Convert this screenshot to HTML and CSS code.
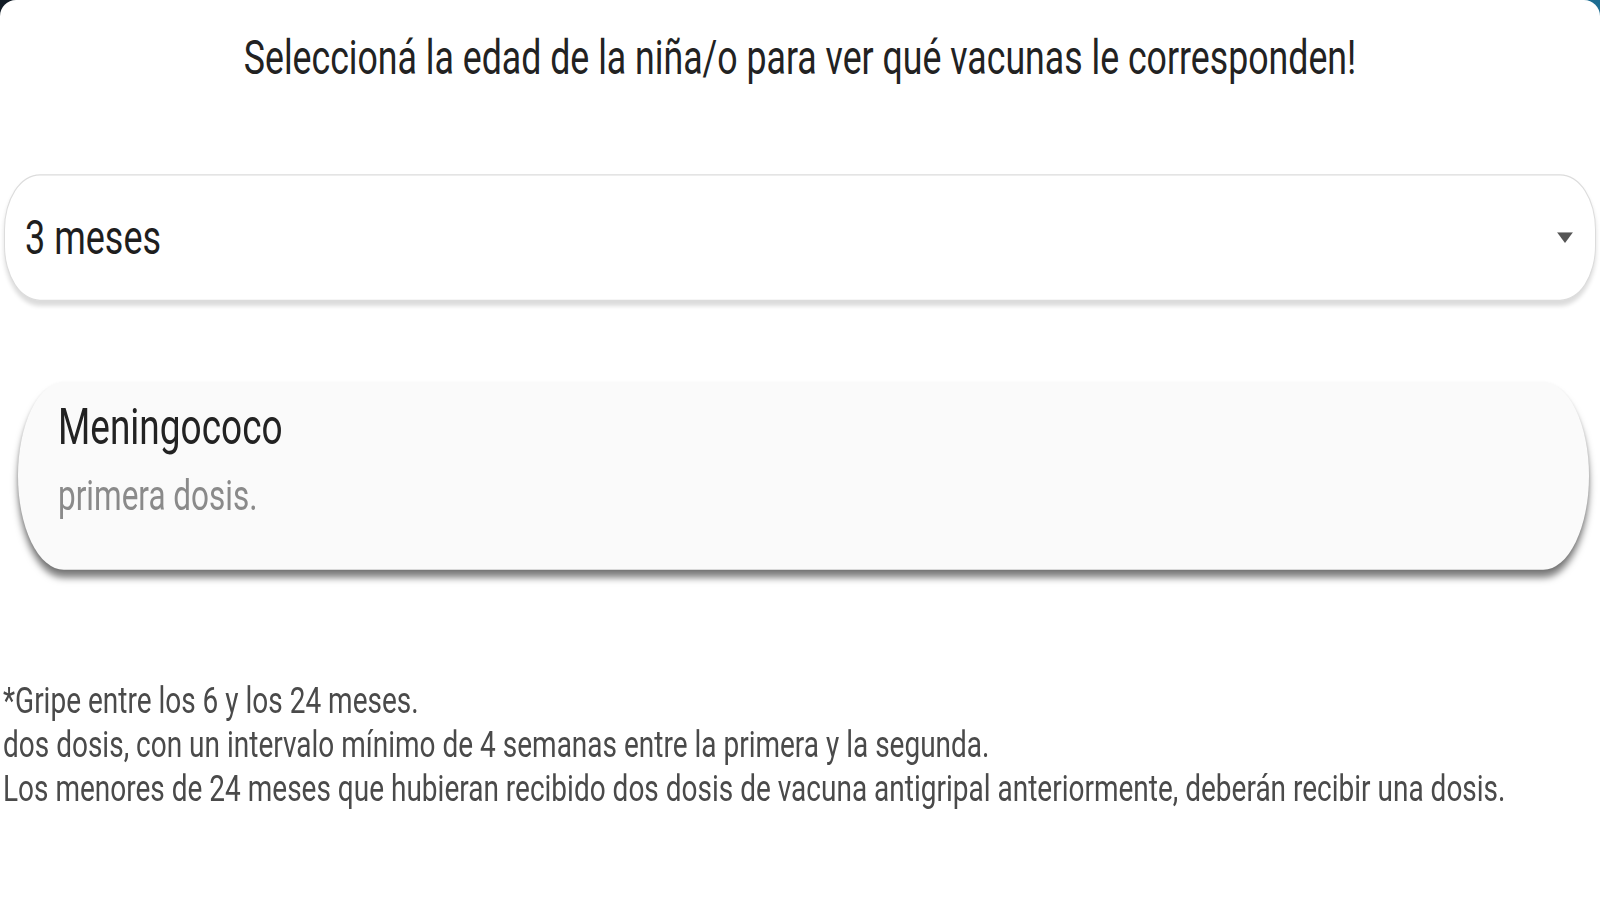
FILE: index.html
```html
<!DOCTYPE html>
<html lang="es">
<head>
<meta charset="utf-8">
<title>Vacunas</title>
<link rel="stylesheet" href="styles.css">
</head>
<body>
<div class="stage">
  <main class="sheet">
    <h1 class="title">Seleccioná la edad de la niña/o para ver qué vacunas le corresponden!</h1>
    <div class="select">
      <span class="select-value">3 meses</span>
      <svg class="caret" viewBox="0 0 16 8" aria-hidden="true"><path d="M0 0H16L8 8Z"/></svg>
    </div>
    <section class="card">
      <h2 class="card-title">Meningococo</h2>
      <p class="card-text">primera dosis.</p>
    </section>
    <div class="notes">
      <p>*Gripe entre los 6 y los 24 meses.</p>
      <p>dos dosis, con un intervalo mínimo de 4 semanas entre la primera y la segunda.</p>
      <p>Los menores de 24 meses que hubieran recibido dos dosis de vacuna antigripal anteriormente, deberán recibir una dosis.</p>
    </div>
  </main>
</div>
</body>
</html>
```
FILE: styles.css
```css
html, body {
  margin: 0;
  height: 900px;
  overflow: hidden;
}
body {
  background: linear-gradient(90deg, #121c26 0%, #1c4f6c 60%, #1d6d92 100%);
}
.stage {
  width: 1600px;
  height: 667px;
  transform: scale(1, 1.35);
  transform-origin: 0 0;
}
.sheet {
  height: 100%;
  box-sizing: border-box;
  background: #fff;
  border-radius: 16px 16px 0 0 / 12px 12px 0 0;
  padding: 22px 4px 0;
  display: flex;
  flex-direction: column;
  font-family: Roboto, "Liberation Sans", sans-serif;
}
.title {
  margin: 0;
  font-size: 35.7px;
  font-weight: 400;
  line-height: 42px;
  text-align: center;
  color: #222;
}
.select {
  margin-top: 65px;
  height: 94px;
  box-sizing: border-box;
  border: 1px solid #dcdcdc;
  border-radius: 36px / 41px;
  background: #fff;
  box-shadow: 0 3px 4px rgba(0, 0, 0, 0.14);
  display: flex;
  align-items: center;
  justify-content: space-between;
  padding: 0 22px 0 20px;
}
.select-value {
  font-size: 36px;
  line-height: 42px;
  color: #1e1e1e;
}
.caret {
  width: 16px;
  height: 8px;
  fill: #555;
}
.card {
  margin: 60px 7px 0 14px;
  height: 139px;
  box-sizing: border-box;
  padding: 12px 40px 0;
  background: #fafafa;
  border-radius: 46px / 70px;
  box-shadow: 0 6px 6px rgba(0, 0, 0, 0.5), 0 1px 3px rgba(0, 0, 0, 0.12);
}
.card-title {
  margin: 0;
  font-size: 37px;
  font-weight: 400;
  line-height: 44px;
  color: #222;
}
.card-text {
  margin: 10px 0 0;
  font-size: 31.5px;
  line-height: 38px;
  color: #8a8a8a;
}
.notes {
  margin-top: 81px;
  margin-left: -1px;
  font-size: 28px;
  line-height: 32.5px;
  color: #4a4a4a;
}
.notes p {
  margin: 0;
}
```
